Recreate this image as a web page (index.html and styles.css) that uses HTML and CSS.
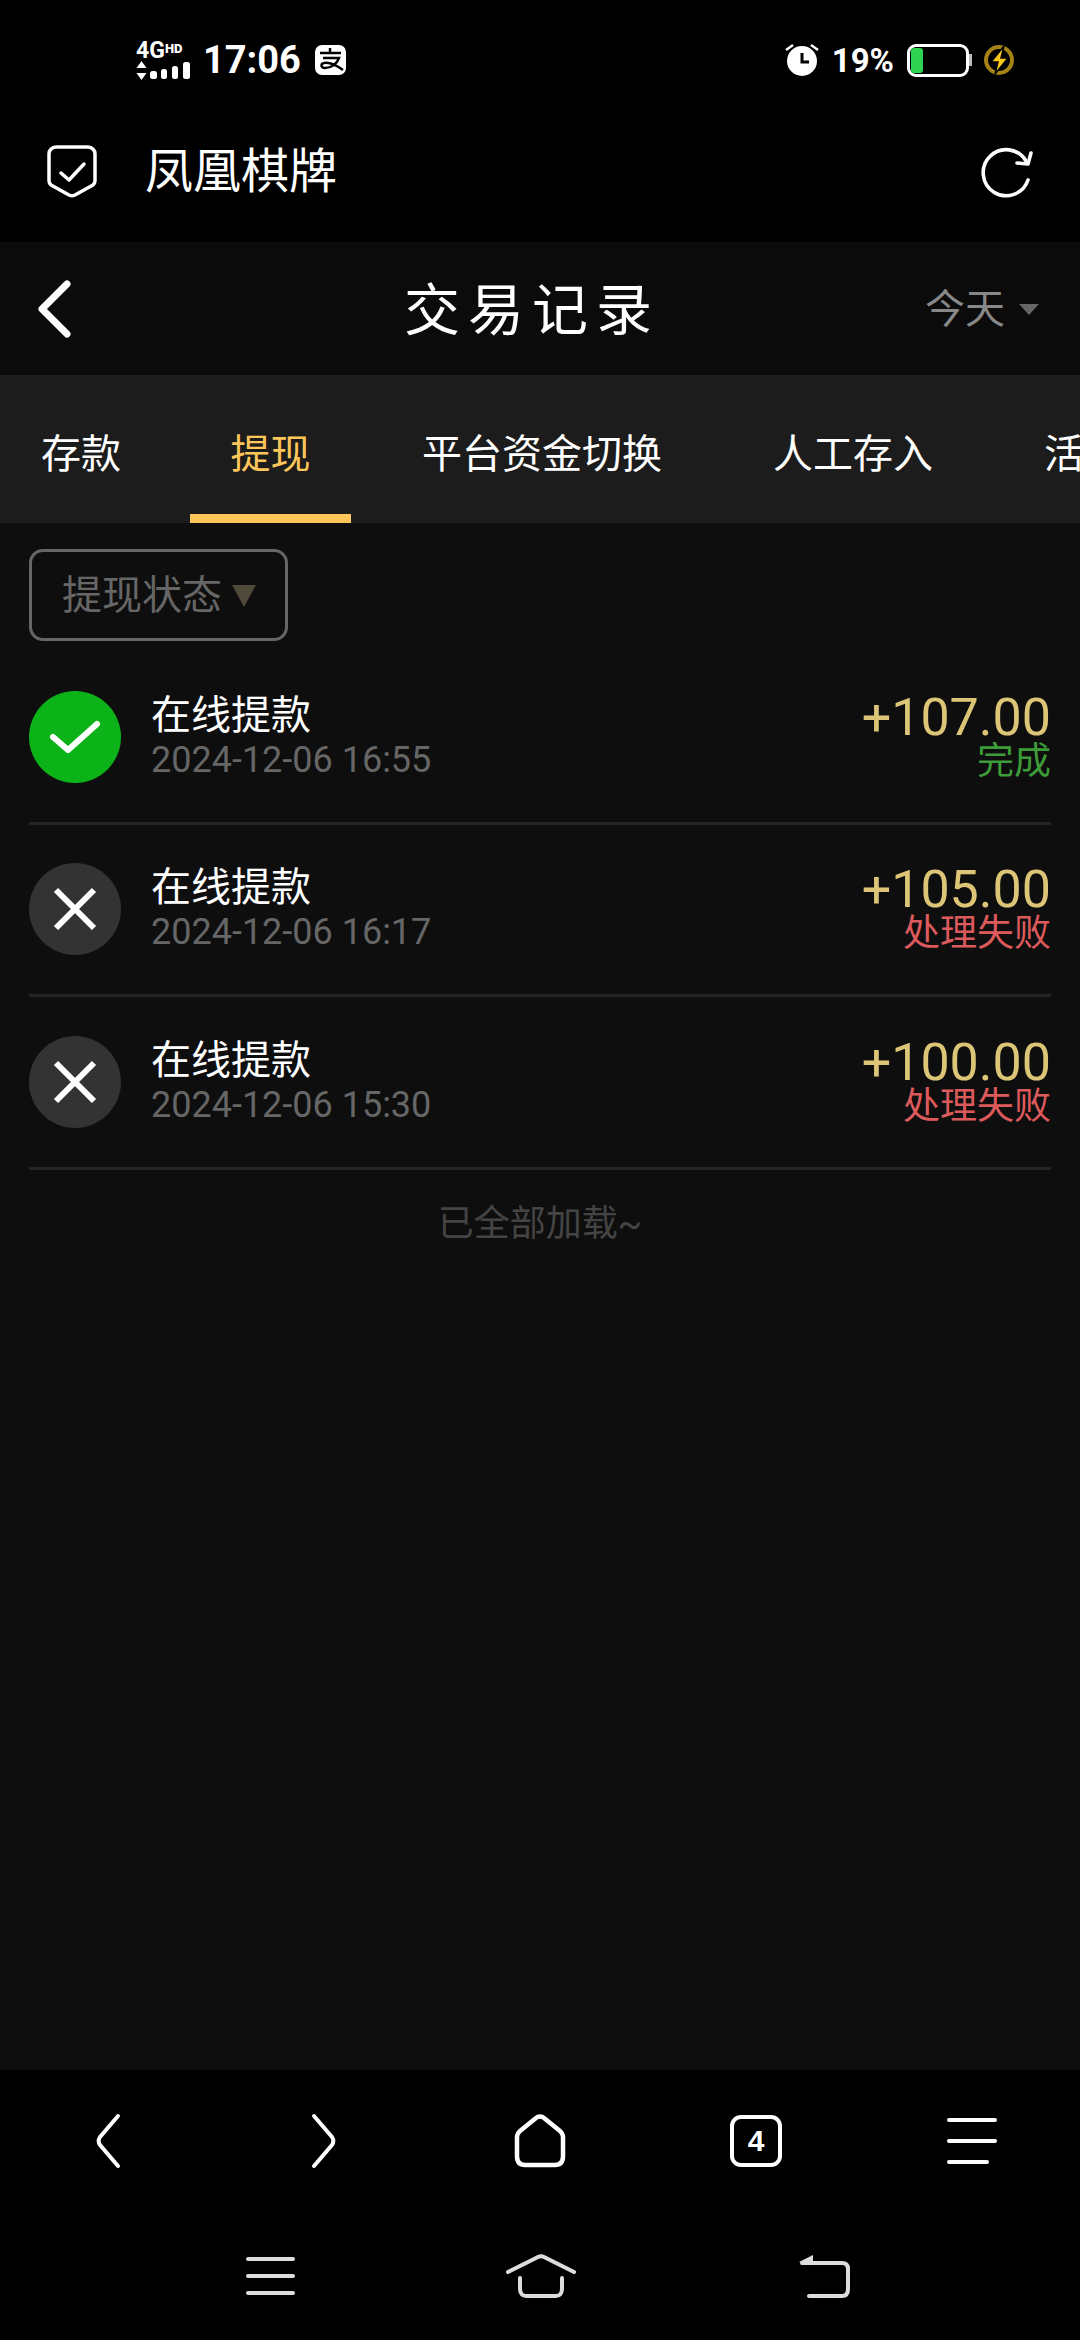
FILE: index.html
```html
<!DOCTYPE html>
<html lang="zh-CN">
<head>
    <meta charset="UTF-8">
    <meta name="viewport" content="width=device-width, initial-scale=1.0">
    <title>交易记录</title>
    <link rel="stylesheet" href="styles.css">
</head>
<body>
    <div class="phone">
        <div class="status-bar">
            <div class="status-left">
                <div class="signal">
                    <span class="signal-label">4G<small>HD</small></span>
                    <svg width="54" height="19" viewBox="0 0 54 19" fill="#fff">
                        <path d="M5.5 0l5 7H.5zM5.5 19l5-7H.5z"/>
                        <rect x="14" y="10" width="7" height="8" rx="2.5"/>
                        <rect x="25" y="8" width="6" height="10" rx="2.5"/>
                        <rect x="36" y="5" width="6" height="13" rx="2.5"/>
                        <rect x="47" y="1" width="7" height="17" rx="2.5"/>
                    </svg>
                </div>
                <span class="clock">17:06</span>
                <svg class="alipay" width="32" height="30" viewBox="0 0 32 30">
                    <rect width="31" height="30" rx="7" fill="#fff"/>
                    <path d="M5 8h21M15 3v6M8 13h16c-2 6-8 10-14 10-4 0-5-4-1-5 5-1 12 2 19 7" fill="none" stroke="#000" stroke-width="2.4"/>
                </svg>
            </div>
            <div class="status-right">
                <svg width="34" height="32" viewBox="0 0 34 32" fill="none">
                    <path d="M1 6l7-5M33 6l-7-5" stroke="#fff" stroke-width="2.4"/>
                    <circle cx="17" cy="17" r="15" fill="#fff"/>
                    <path d="M17 9v9h7" stroke="#000" stroke-width="3"/>
                </svg>
                <span class="battery-text">19%</span>
                <div class="battery">
                    <div class="battery-level"></div>
                </div>
                <div class="battery-tip"></div>
                <svg class="charge" width="32" height="34" viewBox="0 0 32 34">
                    <circle cx="16" cy="17" r="13" fill="none" stroke="#a58316" stroke-width="4"/>
                    <path d="M21 3L8 19h7l-3 12 13-16h-7z" fill="#fbc91c" stroke="#000" stroke-width="1.5"/>
                </svg>
            </div>
        </div>

        <div class="browser-bar">
            <svg width="50" height="54" viewBox="0 0 50 54" fill="none" stroke="#fff" stroke-width="3.5" stroke-linejoin="round">
                <path d="M9 2h32a7 7 0 0 1 7 7v27c0 2-1 3-2 4L28 50c-2 1-4 1-6 0L4 40c-1-1-2-2-2-4V9a7 7 0 0 1 7-7z"/>
                <path d="M14 28l8 7 15-16" stroke-linecap="round"/>
            </svg>
            <span class="site-name">凤凰棋牌</span>
            <svg class="reload" width="52" height="52" viewBox="0 0 52 52" fill="none" stroke="#fff" stroke-width="3.6" stroke-linecap="round" stroke-linejoin="round">
                <path d="M47 34A23 23 0 1 1 45 15"/>
                <path d="M50 7l-3 11-11-1"/>
            </svg>
        </div>

        <div class="page">
            <div class="title-bar">
                <svg class="back" width="36" height="58" viewBox="0 0 36 58" fill="none" stroke="#fff" stroke-width="7" stroke-linecap="round" stroke-linejoin="round">
                    <path d="M31 4L6 29l25 25"/>
                </svg>
                <h1>交易记录</h1>
                <div class="date-picker">今天<span class="caret"></span></div>
            </div>

            <div class="tabs">
                <span class="tab tab-deposit">存款</span>
                <span class="tab tab-active">提现</span>
                <span class="tab tab-switch">平台资金切换</span>
                <span class="tab tab-manual">人工存入</span>
                <span class="tab tab-more">活动</span>
            </div>

            <div class="filter-row">
                <div class="filter">提现状态<span class="filter-arrow"></span></div>
            </div>

            <ul class="records">
                <li class="record">
                    <span class="badge badge-ok">
                        <svg width="52" height="36" viewBox="0 0 52 36" fill="none" stroke="#fff" stroke-width="6" stroke-linecap="round" stroke-linejoin="round">
                            <path d="M4 18l15 13L48 5"/>
                        </svg>
                    </span>
                    <div class="record-info">
                        <div class="record-name">在线提款</div>
                        <div class="record-time">2024-12-06 16:55</div>
                    </div>
                    <div class="record-side">
                        <div class="amount">+107.00</div>
                        <div class="state state-ok">完成</div>
                    </div>
                </li>
                <li class="record">
                    <span class="badge">
                        <svg width="44" height="44" viewBox="0 0 44 44" fill="none" stroke="#fff" stroke-width="6">
                            <path d="M3 3l38 38M41 3L3 41"/>
                        </svg>
                    </span>
                    <div class="record-info">
                        <div class="record-name">在线提款</div>
                        <div class="record-time">2024-12-06 16:17</div>
                    </div>
                    <div class="record-side">
                        <div class="amount">+105.00</div>
                        <div class="state state-fail">处理失败</div>
                    </div>
                </li>
                <li class="record">
                    <span class="badge">
                        <svg width="44" height="44" viewBox="0 0 44 44" fill="none" stroke="#fff" stroke-width="6">
                            <path d="M3 3l38 38M41 3L3 41"/>
                        </svg>
                    </span>
                    <div class="record-info">
                        <div class="record-name">在线提款</div>
                        <div class="record-time">2024-12-06 15:30</div>
                    </div>
                    <div class="record-side">
                        <div class="amount">+100.00</div>
                        <div class="state state-fail">处理失败</div>
                    </div>
                </li>
            </ul>
            <div class="all-loaded">已全部加载~</div>
        </div>

        <div class="browser-nav">
            <svg width="30" height="56" viewBox="0 0 30 56" fill="none" stroke="#fff" stroke-width="4" stroke-linecap="round" stroke-linejoin="round">
                <path d="M25 3L7 24c-2 3-2 5 0 8l18 21"/>
            </svg>
            <svg width="30" height="56" viewBox="0 0 30 56" fill="none" stroke="#fff" stroke-width="4" stroke-linecap="round" stroke-linejoin="round">
                <path d="M5 3l18 21c2 3 2 5 0 8L5 53"/>
            </svg>
            <svg width="52" height="54" viewBox="0 0 52 54" fill="none" stroke="#fff" stroke-width="4.5" stroke-linejoin="round">
                <path d="M22 4c2-2 6-2 8 0l16 13c2 2 3 3 3 6v19c0 6-3 9-8 9H11c-5 0-8-3-8-9V23c0-3 1-4 3-6z"/>
            </svg>
            <div class="tab-count">4</div>
            <div class="nav-menu">
                <span></span>
                <span></span>
                <span class="short"></span>
            </div>
        </div>

        <div class="system-nav">
            <div class="sys-menu">
                <span></span>
                <span></span>
                <span></span>
            </div>
            <svg class="sys-home" width="70" height="44" viewBox="0 0 70 44" fill="none" stroke="#ddd" stroke-width="4" stroke-linecap="round" stroke-linejoin="round">
                <path d="M2 18L32 3c2-1 4-1 6 0l30 15"/>
                <path d="M14 24v11c0 4 2 7 6 7h30c4 0 6-3 6-7V24"/>
            </svg>
            <svg class="sys-back" width="54" height="44" viewBox="0 0 54 44" fill="none" stroke="#ddd" stroke-width="4" stroke-linecap="round" stroke-linejoin="round">
                <path d="M6 9h40c4 0 6 2 6 6v20c0 5-2 7-6 7H13"/>
                <path d="M17 1L3 8l14 3z" fill="#ddd" stroke="none"/>
            </svg>
        </div>
    </div>
</body>
</html>
```

FILE: styles.css
```css
* {
    margin: 0;
    padding: 0;
    box-sizing: border-box;
}

body {
    font-family: Roboto, "Noto Sans CJK SC", sans-serif;
    background: #000;
    color: #fff;
}

.phone {
    width: 1080px;
    height: 2340px;
    display: flex;
    flex-direction: column;
    overflow: hidden;
}

/* status bar */
.status-bar {
    height: 115px;
    padding: 5px 65px 0 136px;
    display: flex;
    align-items: center;
    justify-content: space-between;
    flex-shrink: 0;
}

.status-left,
.status-right {
    display: flex;
    align-items: center;
}

.signal {
    width: 54px;
    display: flex;
    flex-direction: column;
    gap: 2px;
    margin-right: 13px;
}

.signal-label {
    font-size: 23px;
    font-weight: 700;
    line-height: 16px;
    white-space: nowrap;
}

.signal-label small {
    font-size: 13px;
    font-weight: 900;
    vertical-align: 5px;
}

.clock {
    font-size: 38px;
    font-weight: 700;
}

.alipay {
    margin-left: 14px;
}

.battery-text {
    font-size: 33px;
    font-weight: 700;
    margin-left: 13px;
}

.battery {
    width: 62px;
    height: 33px;
    margin-left: 13px;
    border: 3px solid #fff;
    border-radius: 9px;
    padding: 1px;
}

.battery-level {
    width: 12px;
    height: 100%;
    background: #2ed34f;
    border-radius: 3px;
}

.battery-tip {
    width: 3px;
    height: 12px;
    background: #bbb;
}

.charge {
    margin-left: 11px;
}

/* browser header */
.browser-bar {
    height: 127px;
    padding: 0 47px 14px;
    display: flex;
    align-items: center;
    flex-shrink: 0;
}

.site-name {
    font-size: 48px;
    margin-left: 48px;
    line-height: 1;
}

.reload {
    margin-left: auto;
}

/* page */
.page {
    height: 1828px;
    background: #0e0e0e;
    flex-shrink: 0;
}

.title-bar {
    height: 133px;
    display: flex;
    align-items: center;
    position: relative;
    padding-left: 36px;
    background: #0b0b0b;
}

.back {
    flex-shrink: 0;
}

.title-bar h1 {
    position: absolute;
    left: 0;
    width: 1064px;
    text-align: center;
    font-size: 56px;
    font-weight: 400;
    letter-spacing: 8px;
    padding-bottom: 6px;
}

.date-picker {
    margin-left: auto;
    margin-right: 41px;
    padding-bottom: 6px;
    font-size: 40px;
    color: #888;
    display: flex;
    align-items: center;
}

.caret {
    margin-left: 14px;
    margin-top: 8px;
    border-left: 10px solid transparent;
    border-right: 10px solid transparent;
    border-top: 11px solid #666;
}

.tabs {
    height: 148px;
    background: #1c1c1c;
    display: flex;
    overflow: hidden;
    font-size: 40px;
    white-space: nowrap;
}

.tab {
    height: 148px;
    line-height: 160px;
    flex-shrink: 0;
}

.tab-deposit {
    margin-left: 41px;
}

.tab-active {
    width: 161px;
    margin-left: 69px;
    text-align: center;
    color: #fdc65a;
    border-bottom: 9px solid #fdc65a;
}

.tab-switch {
    margin-left: 71px;
}

.tab-manual {
    margin-left: 111px;
}

.tab-more {
    margin-left: 111px;
}

.filter-row {
    padding: 26px 29px 0;
}

.filter {
    width: 259px;
    height: 92px;
    border: 3px solid #666;
    border-radius: 14px;
    font-size: 40px;
    color: #666;
    display: flex;
    align-items: center;
    padding: 0 0 6px 30px;
}

.filter-arrow {
    margin-left: 10px;
    margin-top: 8px;
    border-left: 12px solid transparent;
    border-right: 12px solid transparent;
    border-top: 22px solid #4f4a3a;
}

/* records */
.records {
    list-style: none;
    margin: 11px 29px 0;
}

.record {
    height: 172.5px;
    display: flex;
    align-items: center;
    border-bottom: 3px solid #242424;
}

.badge {
    width: 92px;
    height: 92px;
    border-radius: 50%;
    background: #333;
    display: flex;
    align-items: center;
    justify-content: center;
    flex-shrink: 0;
}

.badge-ok {
    background: #0bb318;
}

.record-info {
    margin-left: 30px;
}

.record-name {
    font-size: 40px;
    line-height: 46px;
}

.record-time {
    font-size: 36px;
    line-height: 42px;
    color: #666;
}

.record-side {
    margin-left: auto;
    text-align: right;
}

.amount {
    font-size: 52px;
    line-height: 50px;
    color: #dcc576;
}

.state {
    font-size: 37px;
    line-height: 38px;
}

.state-ok {
    color: #3c9c37;
}

.state-fail {
    color: #dd5a5c;
}

.all-loaded {
    margin-top: 24px;
    text-align: center;
    font-size: 36px;
    color: #444;
}

/* browser + system navigation */
.browser-nav {
    height: 142px;
    display: grid;
    grid-template-columns: repeat(5, 216px);
    justify-items: center;
    align-items: center;
    flex-shrink: 0;
}

.tab-count {
    width: 52px;
    height: 52px;
    border: 4px solid #fff;
    border-radius: 11px;
    font-size: 30px;
    font-weight: 700;
    display: flex;
    align-items: center;
    justify-content: center;
    font-family: "Liberation Sans", sans-serif;
}

.nav-menu {
    width: 50px;
    display: flex;
    flex-direction: column;
    gap: 17px;
}

.nav-menu span {
    height: 4px;
    background: #fff;
    border-radius: 2px;
}

.nav-menu .short {
    width: 42px;
}

.system-nav {
    flex: 1;
    padding-left: 246px;
    display: flex;
    align-items: center;
}

.sys-menu {
    width: 49px;
    display: flex;
    flex-direction: column;
    gap: 13px;
}

.sys-menu span {
    height: 4px;
    background: #ddd;
    border-radius: 2px;
}

.sys-home {
    margin-left: 211px;
}

.sys-back {
    margin-left: 220px;
}
```
